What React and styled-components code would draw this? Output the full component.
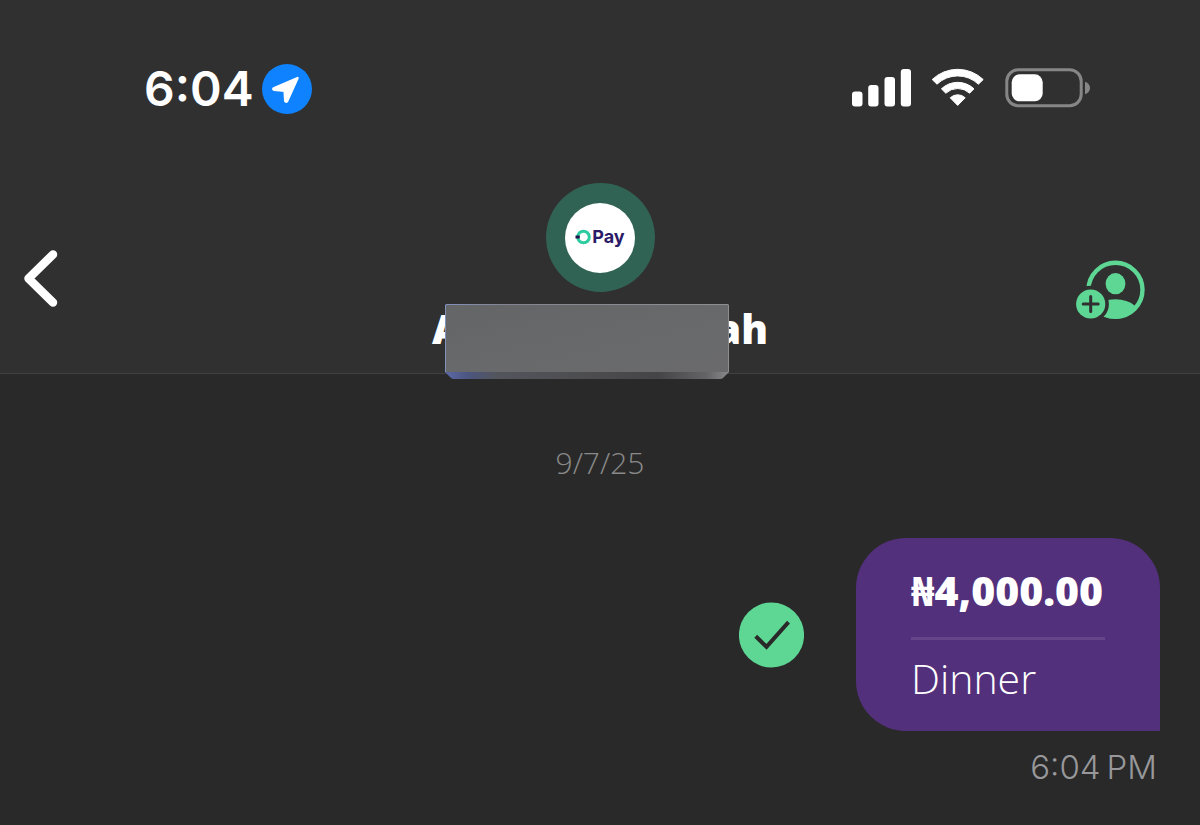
import React from "react";
import styled, { createGlobalStyle } from "styled-components";

const Global = createGlobalStyle`
  *, *::before, *::after { box-sizing: border-box; }
  html, body { margin: 0; background: #292929; }
  svg { display: block; flex: none; }
`;

const ui = `"Inter", "Liberation Sans", sans-serif`;
const brand = `"Open Sans", "Noto Sans", sans-serif`;

const Page = styled.div`
  min-height: 100vh;
  background: #292929;
  color: #fff;
  font-family: ${brand};
`;

const Top = styled.header`
  background: #303030;
  border-bottom: 1px solid #414141;
`;

const StatusBar = styled.div`
  display: flex;
  justify-content: space-between;
  align-items: center;
  padding: 64px 110px 0 144px;
`;

const StatusGroup = styled.div`
  display: flex;
  align-items: center;
  gap: ${(p) => p.$gap}px;
`;

const Clock = styled.time`
  font: 600 48px/50px ${ui};
`;

const NavBar = styled.div`
  display: grid;
  grid-template-columns: 1fr auto 1fr;
  align-items: center;
  padding: 69px 55px 0 24px;
`;

const IconButton = styled.button`
  justify-self: ${(p) => (p.$end ? "end" : "start")};
  padding: ${(p) => (p.$end ? "24px 0 0" : "0")};
  border: 0;
  background: none;
  cursor: pointer;
`;

const Contact = styled.div`
  display: flex;
  flex-direction: column;
  align-items: center;
  width: 336px;
  height: 190px;
  margin-left: 31px;
`;

const Avatar = styled.div`
  display: grid;
  place-items: center;
  width: 109px;
  height: 109px;
  border-radius: 50%;
  background: #316355;
`;

const Logo = styled.div`
  display: flex;
  align-items: center;
  justify-content: center;
  gap: 1px;
  width: 70px;
  height: 70px;
  padding-bottom: 2px;
  border-radius: 50%;
  background: #fff;
  color: #2a1a68;
  font: 700 18px/20px ${ui};
`;

const Name = styled.h1`
  position: relative;
  display: flex;
  justify-content: space-between;
  width: 100%;
  margin: 12px 0 0;
  font: 800 40px/50px ${brand};
`;

const Cover = styled.span`
  position: absolute;
  top: 0;
  left: 13px;
  width: 284px;
  height: 75px;
`;

const Thread = styled.main`
  display: flex;
  flex-direction: column;
  padding: 67px 40px 0;
`;

const DateLabel = styled.time`
  align-self: center;
  color: #8a8a8a;
  font: 350 30px/44px ${brand};
`;

const Message = styled.div`
  display: flex;
  justify-content: flex-end;
  align-items: center;
  gap: 52px;
  margin-top: 53px;
`;

const Bubble = styled.article`
  width: 304px;
  padding: 26px 55px 27px;
  border-radius: 50px 50px 0 50px;
  background: #53307b;
`;

const Amount = styled.p`
  margin: 0;
  padding-bottom: 21px;
  border-bottom: 3px solid #65448a;
  white-space: nowrap;
  font: 800 41px/52px ${brand};
`;

const Note = styled.p`
  margin: 0;
  padding-top: 12px;
  font: 350 41px/52px ${brand};
`;

const Sent = styled.time`
  align-self: flex-end;
  margin-top: 16px;
  padding-right: 3px;
  color: #98989b;
  font: 350 33px/40px ${ui};
`;

const LocationIcon = () => (
  <svg width="50" height="50" viewBox="0 0 50 50" aria-label="Location in use">
    <circle cx="25" cy="25" r="25" fill="#0f83ff" />
    <path
      d="M35.6 14 L11.6 24.3 Q10.8 25.2 12 25.8 L22.6 26.8 L23.2 37 Q24 38.6 25.2 37 Z"
      fill="#fff" stroke="#fff" strokeWidth="2.4" strokeLinejoin="round"
    />
  </svg>
);

const SignalIcon = () => (
  <svg width="60" height="42" viewBox="0 0 60 42" fill="#fff" aria-label="Signal">
    <rect x="1" y="23.5" width="10.5" height="15" rx="3" />
    <rect x="17.200" y="17" width="10.300" height="21.500" rx="3" />
    <rect x="33.500" y="9" width="10.500" height="29.500" rx="3" />
    <rect x="49.800" y="1" width="10.200" height="37.500" rx="3" />
  </svg>
);

const WifiIcon = () => (
  <svg width="54" height="42" viewBox="0 0 54 42" aria-label="Wi-Fi">
    <g fill="#fff" stroke="#fff" strokeWidth="1" strokeLinejoin="round">
      <path d="M1.2 11.5 A37 37 0 0 1 52.2 11.5 L47.4 16.2 A30 30 0 0 0 6 16.2 Z" />
      <path d="M10.4 20.8 A23.8 23.8 0 0 1 43 20.8 L38.6 25.2 A17.4 17.4 0 0 0 14.8 25.2 Z" />
      <path d="M19.2 29.8 A10.8 10.8 0 0 1 34.2 29.8 L26.7 37.4 Z" />
    </g>
  </svg>
);

const BatteryIcon = () => (
  <svg width="85" height="42" viewBox="0 0 85 42" aria-label="Battery">
    <rect x="1.8" y="1.8" width="74.4" height="36" rx="11.5" fill="none" stroke="#868686" strokeWidth="3" />
    <rect x="6.7" y="6.3" width="31" height="27" rx="8" fill="#fff" />
    <path d="M80 13.7 Q85 15.5 85 20 Q85 24.500 80 26.300 Z" fill="#868686" />
  </svg>
);

const BackIcon = () => (
  <svg width="34" height="58" viewBox="0 0 34 58">
    <path d="M29 5.500 L4.500 29.500 L29 53.500" fill="none" stroke="#fff" strokeWidth="8.500" strokeLinecap="round" strokeLinejoin="round" />
  </svg>
);

const AddPersonIcon = () => (
  <svg width="69" height="60" viewBox="0 0 69 60">
    <circle cx="39.500" cy="29.800" r="27" fill="none" stroke="#5ed795" strokeWidth="4.400" />
    <ellipse cx="39.500" cy="23.700" rx="9.900" ry="10.600" fill="#5ed795" />
    <path d="M28 41 Q32.500 39.500 39.500 39.300 Q51.500 39.500 58.500 45.500 Q54 58.500 39.500 58.800 Q33 58.800 28 56.500 Z" fill="#5ed795" />
    <circle cx="14.700" cy="44" r="18.200" fill="#303030" />
    <circle cx="14.700" cy="44" r="14.600" fill="#5ed795" />
    <path d="M14.700 36.500 V51.500 M7.200 44 H22.200" stroke="#303030" strokeWidth="3" strokeLinecap="round" />
  </svg>
);

const LogoRing = () => (
  <svg width="16" height="16" viewBox="0 0 16 16">
    <circle cx="8.500" cy="8" r="5.800" fill="none" stroke="#2ccba0" strokeWidth="3" />
    <path d="M0.500 8 H4.800" stroke="#20124d" strokeWidth="3" />
  </svg>
);

const CheckIcon = () => (
  <svg width="65" height="66" viewBox="0 0 65 66" aria-label="Sent successfully">
    <circle cx="32.500" cy="33" r="32.600" fill="#5ed795" />
    <path d="M16.700 34.300 L27.500 44.800 L49.500 20.200" fill="none" stroke="#292929" strokeWidth="4" />
  </svg>
);

const CoverArt = () => (
  <svg width="100%" height="100%" viewBox="0 0 284 75" preserveAspectRatio="none">
    <defs>
      <linearGradient id="face" x2="1" y2="1">
        <stop offset="0" stopColor="#646566" />
        <stop offset="0.5" stopColor="#68696b" />
        <stop offset="1" stopColor="#6a6a6c" />
      </linearGradient>
      <linearGradient id="lip">
        <stop offset="0" stopColor="#5c68a8" />
        <stop offset="0.08" stopColor="#4c5680" />
        <stop offset="0.18" stopColor="#53555d" />
        <stop offset="0.5" stopColor="#4d4d50" />
        <stop offset="0.75" stopColor="#454547" />
        <stop offset="0.92" stopColor="#646466" />
        <stop offset="1" stopColor="#89898c" />
      </linearGradient>
      <linearGradient id="edge">
        <stop offset="0" stopColor="#8290bd" />
        <stop offset="0.2" stopColor="#828592" />
        <stop offset="1" stopColor="#8e8e90" />
      </linearGradient>
    </defs>
    <path d="M0 2 Q0 0 2 0 H282 Q284 0 284 2 V68 L278 74 Q277 75 275 75 H9 Q7 75 6 74 L0 68 Z" fill="url(#lip)" />
    <path d="M0 2 Q0 0 2 0 H282 Q284 0 284 2 V68 H0 Z" fill="url(#edge)" />
    <rect x="1" y="1" width="282" height="67" rx="1" fill="url(#face)" />
  </svg>
);

export default function App() {
  return (
    <Page>
      <Global />
      <Top>
        <StatusBar>
          <StatusGroup $gap={8}>
            <Clock>6:04</Clock>
            <LocationIcon />
          </StatusGroup>
          <StatusGroup $gap={20}>
            <SignalIcon />
            <WifiIcon />
            <BatteryIcon />
          </StatusGroup>
        </StatusBar>
        <NavBar>
          <IconButton aria-label="Back"><BackIcon /></IconButton>
          <Contact>
            <Avatar>
              <Logo><LogoRing />Pay</Logo>
            </Avatar>
            <Name>
              <span>A</span>
              <span>ah</span>
              <Cover><CoverArt /></Cover>
            </Name>
          </Contact>
          <IconButton $end aria-label="Add contact"><AddPersonIcon /></IconButton>
        </NavBar>
      </Top>
      <Thread>
        <DateLabel>9/7/25</DateLabel>
        <Message>
          <CheckIcon />
          <Bubble>
            <Amount>₦4,000.00</Amount>
            <Note>Dinner</Note>
          </Bubble>
        </Message>
        <Sent>6:04{"\u202f"}PM</Sent>
      </Thread>
    </Page>
  );
}
